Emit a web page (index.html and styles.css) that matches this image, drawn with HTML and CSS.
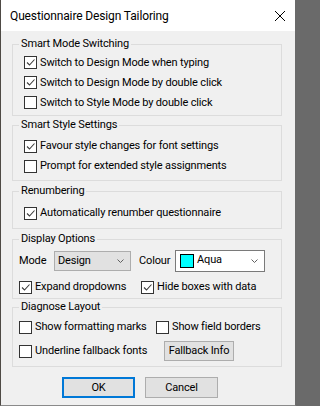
FILE: index.html
```html
<!DOCTYPE html>
<html>
<head>
<meta charset="utf-8">
<link rel="stylesheet" href="styles.css">
</head>
<body>
<div class="window">
  <div class="titlebar">
    <span class="title">Questionnaire Design Tailoring</span>
    <svg class="close" width="10" height="10" viewBox="0 0 10 10"><path d="M0 0 L10 10 M10 0 L0 10" stroke="#000" stroke-width="1" fill="none"/></svg>
  </div>
  <div class="content">
    <div class="group g1">
      <div class="legend">Smart Mode Switching</div>
      <div class="rows">
        <div class="row"><span class="cb on"><svg viewBox="0 0 11 11"><path d="M2 5.5 L4.5 8 L9.5 2.5"/></svg></span>Switch to Design Mode when typing</div>
        <div class="row"><span class="cb on"><svg viewBox="0 0 11 11"><path d="M2 5.5 L4.5 8 L9.5 2.5"/></svg></span>Switch to Design Mode by double click</div>
        <div class="row"><span class="cb"></span>Switch to Style Mode by double click</div>
      </div>
    </div>
    <div class="group g2">
      <div class="legend">Smart Style Settings</div>
      <div class="rows">
        <div class="row"><span class="cb on"><svg viewBox="0 0 11 11"><path d="M2 5.5 L4.5 8 L9.5 2.5"/></svg></span>Favour style changes for font settings</div>
        <div class="row"><span class="cb"></span>Prompt for extended style assignments</div>
      </div>
    </div>
    <div class="group g3">
      <div class="legend">Renumbering</div>
      <div class="rows">
        <div class="row"><span class="cb on"><svg viewBox="0 0 11 11"><path d="M2 5.5 L4.5 8 L9.5 2.5"/></svg></span>Automatically renumber questionnaire</div>
      </div>
    </div>
    <div class="group g4">
      <div class="legend">Display Options</div>
      <div class="rows">
        <div class="row combos">
          <span class="lbl lbl-mode">Mode</span>
          <div class="combo combo-mode"><span>Design</span><svg class="chev" width="7" height="4" viewBox="0 0 7 4"><path d="M0.5 0.5 L3.5 3.5 L6.5 0.5"/></svg></div>
          <span class="lbl lbl-colour">Colour</span>
          <div class="combo combo-colour"><span class="swatch"></span><span class="ctext">Aqua</span><svg class="chev" width="7" height="4" viewBox="0 0 7 4"><path d="M0.5 0.5 L3.5 3.5 L6.5 0.5"/></svg></div>
        </div>
        <div class="row r-opts">
          <div class="item w122"><span class="cb on"><svg viewBox="0 0 11 11"><path d="M2 5.5 L4.5 8 L9.5 2.5"/></svg></span>Expand dropdowns</div>
          <div class="item"><span class="cb on"><svg viewBox="0 0 11 11"><path d="M2 5.5 L4.5 8 L9.5 2.5"/></svg></span>Hide boxes with data</div>
        </div>
      </div>
    </div>
    <div class="group g5">
      <div class="legend">Diagnose Layout</div>
      <div class="rows">
        <div class="row">
          <div class="item w137"><span class="cb"></span>Show formatting marks</div>
          <div class="item"><span class="cb"></span>Show field borders</div>
        </div>
        <div class="row r-fb">
          <div class="item w145"><span class="cb"></span>Underline fallback fonts</div>
          <div class="btn btn-fb">Fallback Info</div>
        </div>
      </div>
    </div>
    <div class="buttons">
      <div class="btn btn-main btn-default">OK</div>
      <div class="btn btn-main">Cancel</div>
    </div>
  </div>
</div>
</body>
</html>
```

FILE: styles.css
```css
* { box-sizing: border-box; }
html, body { margin: 0; padding: 0; }
html { background: #6a6a6a; }
body {
  width: 296px;
  height: 406px;
  overflow: hidden;
  background: #6a6a6a;
  font-family: "Roboto", "Liberation Sans", sans-serif;
  font-size: 11px;
  letter-spacing: -0.15px;
  line-height: 14px;
  color: #000;
}
.window {
  width: 296px;
  height: 406px;
  display: flex;
  flex-direction: column;
  background: #f0f0f0;
  border-left: 1px solid #4e4a45;
  border-right: 1px solid #6a6a6a;
  border-bottom: 1px solid #8a8a8a;
}
.titlebar {
  height: 31px;
  flex: none;
  background: #fff;
  display: flex;
  align-items: center;
  padding-left: 9px;
}
.title {
  white-space: nowrap;
  font-size: 12px;
  letter-spacing: -0.13px;
}
.close { margin-left: auto; margin-right: 10px; display: block; }
.content {
  display: flex;
  flex-direction: column;
  padding: 13px 13px 0 11px;
}
.group {
  border: 1px solid #dcdcdc;
  display: flex;
  flex-direction: column;
}
.legend {
  margin: -8px 0 0 6px;
  padding: 0 2px;
  line-height: 14px;
  background: #f0f0f0;
  align-self: flex-start;
  white-space: nowrap;
}
.rows { display: flex; flex-direction: column; }
.row {
  height: 20px;
  display: flex;
  align-items: center;
  white-space: nowrap;
}
.item { display: flex; align-items: center; height: 20px; }
.w122 { width: 122px; }
.w137 { width: 137px; }
.w145 { width: 145px; }
.cb {
  width: 13px;
  height: 13px;
  flex: none;
  border: 1px solid #333;
  background: #fff;
  margin-right: 3px;
  display: flex;
}
.cb svg { width: 11px; height: 11px; display: block; }
.cb svg path { fill: none; stroke: #3c3c3c; stroke-width: 1.1; }

.g1 .rows { padding: 1.5px 0 2.5px 11px; }
.g2 { margin-top: 9px; }
.g2 .rows { padding: 4px 0 4px 11px; }
.g3 { margin-top: 10px; }
.g3 .rows { padding: 5px 0 5px 11px; }
.g4 { margin-top: 10px; }
.g4 .rows { padding: 4px 0 1px 6px; }
.g4 .combos { height: 22px; }
.g4 .r-opts { margin-top: 5px; }
.g5 { margin-top: 8px; }
.g5 .rows { padding: 3px 0 5px 6px; }
.g5 .r-fb { margin-top: 4px; }

.lbl-mode { width: 35px; }
.lbl-colour { width: 36px; margin-left: 8px; }
.combo {
  display: flex;
  align-items: center;
}
.combo-mode {
  width: 77px;
  height: 20px;
  background: #e1e1e1;
  border: 1px solid #adadad;
  padding-left: 3px;
}
.combo-colour {
  width: 90px;
  height: 22px;
  background: #fff;
  border: 1px solid #7a7a7a;
  padding-left: 4px;
}
.swatch {
  width: 14px;
  height: 14px;
  background: #00ffff;
  border: 1px solid #000;
  flex: none;
}
.ctext { margin-left: 3px; padding-bottom: 2px; }
.chev { margin-left: auto; margin-right: 6px; display: block; }
.chev path { fill: none; stroke: #606060; stroke-width: 1; }

.btn {
  background: #e1e1e1;
  border: 1px solid #adadad;
  display: flex;
  align-items: center;
  justify-content: center;
}
.btn-fb { width: 70px; height: 20px; }
.buttons {
  display: flex;
  gap: 10px;
  margin-top: 10px;
  padding-left: 50px;
}
.btn-main { width: 73px; height: 21px; }
.btn-default { border: 2px solid #0078d7; }
```
